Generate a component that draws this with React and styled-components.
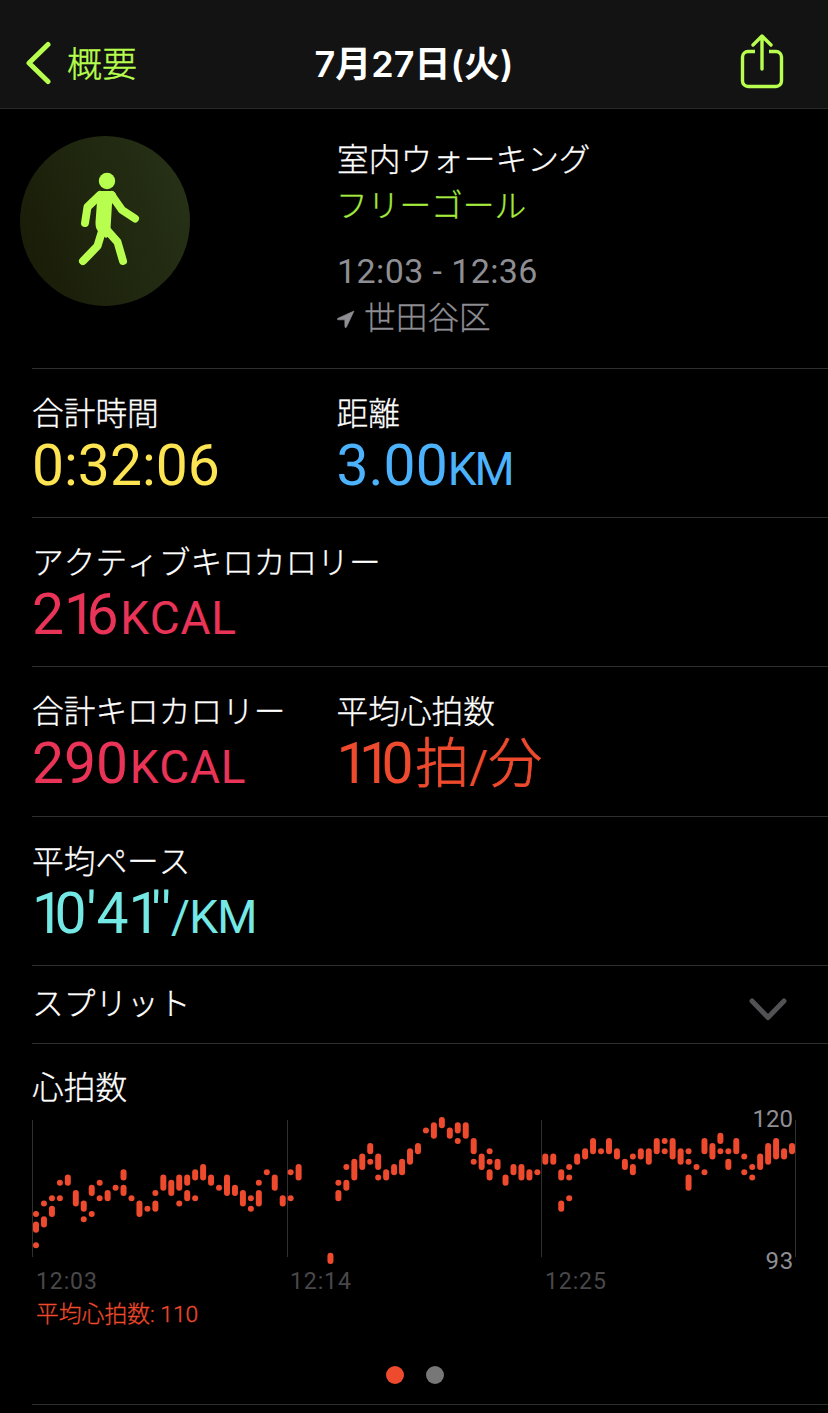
import styled, { createGlobalStyle } from "styled-components";

const GlobalStyle = createGlobalStyle`
  * {
    box-sizing: border-box;
  }

  body {
    margin: 0;
    background: #000;
  }

  h1, h2, p {
    margin: 0;
    font-weight: inherit;
  }
`;

const colors = {
  green: "#b8fe4e",
  goal: "#a5ec3e",
  yellow: "#fde452",
  blue: "#4cb2fb",
  pink: "#e93458",
  orange: "#ee4a2d",
  teal: "#74e8e4",
  gray: "#8e8e93",
  dim: "#48484a",
  line: "#2f2f31",
};

const Page = styled.div`
  width: 828px;
  height: 1413px;
  overflow: hidden;
  background: #000;
  color: #fff;
  font-family: Roboto, "Noto Sans CJK JP", sans-serif;
  font-weight: 300;
  font-kerning: none;
`;

const NavBar = styled.header`
  height: 109px;
  padding: 20px 44px 0 25px;
  display: grid;
  grid-template-columns: 1fr auto 1fr;
  align-items: center;
  background: #131313;
  border-bottom: 1px solid #29292b;
`;

const BackButton = styled.button`
  display: flex;
  align-items: center;
  gap: 16px;
  padding: 0;
  border: 0;
  background: none;
  color: ${colors.green};
  font-family: inherit;
  font-size: 35px;
  font-weight: 300;
  line-height: 50px;
  -webkit-text-stroke: 0.4px currentColor;

  > span {
    padding-top: 3px;
  }

  > svg {
    margin-bottom: 2px;
  }
`;

const NavTitle = styled.h1`
  padding-left: 19px;
  font-family: Inter, "Noto Sans CJK JP", sans-serif;
  font-size: 36px;
  font-weight: 600;
  line-height: 50px;
`;

const ShareButton = styled.button`
  justify-self: end;
  display: flex;
  margin-bottom: 4px;
  padding: 0;
  border: 0;
  background: none;
`;

const Summary = styled.section`
  height: 259px;
  display: grid;
  grid-template-columns: 317px 1fr;
  padding: 27px 0 0 20px;
`;

const Badge = styled.div`
  width: 170px;
  height: 170px;
  border-radius: 50%;
  background: linear-gradient(70deg, #191b07 5%, #20270f 50%, #263217 95%);
`;

const SummaryText = styled.div`
  padding-top: 2px;
  font-size: 31.7px;
  line-height: 46px;
  -webkit-text-stroke: 0.3px currentColor;
`;

const Goal = styled.p`
  margin-left: -1px;
  color: ${colors.goal};
`;

const Time = styled.p`
  margin: 18px 0 2px;
  color: ${colors.gray};
  font-size: 34px;
  font-weight: 400;
  letter-spacing: 0.4px;
  -webkit-text-stroke: 0;
`;

const Place = styled.p`
  display: flex;
  align-items: center;
  gap: 9px;
  color: ${colors.gray};
`;

const Row = styled.section`
  height: ${(props) => props.$height || 149}px;
  margin-left: 32px;
  padding-top: 26px;
  display: grid;
  grid-template-columns: 304.5px 1fr;
  align-items: start;
  border-top: 1px solid ${colors.line};
`;

const Label = styled.p`
  font-size: 31.7px;
  line-height: 40px;
  white-space: nowrap;
  -webkit-text-stroke: 0.3px currentColor;
`;

const Value = styled.p`
  margin-top: -2px;
  color: ${(props) => props.$color};
  font-size: 57px;
  font-weight: 400;
  line-height: 66px;
  white-space: nowrap;
`;

// the figure one is set tighter than the other digits
const One = styled.span`
  letter-spacing: -9.5px;
`;

const Unit = styled.span`
  margin-left: ${(props) => (props.$spacing < 0 ? 0 : 1.5)}px;
  font-size: 46px;
  letter-spacing: ${(props) => props.$spacing}px;
`;

const Kanji = styled.span`
  font-size: 54px;
  font-weight: 300;
  line-height: 1;
  -webkit-text-stroke: 0.8px currentColor;
`;

const SplitRow = styled.section`
  height: 78px;
  margin-left: 32px;
  padding: 0 41px 0 0;
  display: flex;
  align-items: center;
  justify-content: space-between;
  border-top: 1px solid ${colors.line};

  > svg {
    margin-top: 10px;
  }
`;

const HeartSection = styled.section`
  height: 361px;
  margin-left: 32px;
  padding-top: 25px;
  border-top: 1px solid ${colors.line};
`;

const Chart = styled.svg`
  display: block;
  margin-top: -12px;
  font-family: Roboto, sans-serif;
  font-size: 24px;
  font-weight: 400;
`;

const Average = styled.p`
  padding: 1px 0 0 4px;
  color: ${colors.orange};
  font-size: 22.8px;
  line-height: 30px;
  -webkit-text-stroke: 0.3px currentColor;
`;

const Pager = styled.div`
  display: flex;
  gap: 22px;
  margin: 36px 0 0 354px;
`;

const Dot = styled.span`
  width: 18px;
  height: 18px;
  border-radius: 50%;
  background: ${(props) => (props.$active ? colors.orange : "#777")};
`;

const BottomLine = styled.div`
  margin-left: 32px;
  border-top: 1px solid ${colors.line};
`;

// each slot lists its [high, low] ranges in bpm
const heartRate = [
  [[102, 102], [100, 99], [96, 96]],
  [[104, 104], [101, 100]],
  [[105, 105], [103, 102]],
  [[108, 108], [105, 105]],
  [[109, 108]],
  [[106, 104]],
  [[104, 103], [101, 101]],
  [[107, 106], [102, 102]],
  [[108, 108], [105, 105]],
  [[106, 105]],
  [[107, 107]],
  [[110, 109], [107, 106]],
  [[105, 105]],
  [[104, 102]],
  [[103, 103]],
  [[106, 106], [104, 103]],
  [[109, 107]],
  [[108, 106]],
  [[109, 107], [104, 104]],
  [[109, 108], [106, 105]],
  [[110, 109], [105, 105]],
  [[111, 109]],
  [[109, 108]],
  [[107, 107]],
  [[109, 106]],
  [[107, 106]],
  [[106, 104]],
  [[105, 105], [103, 103]],
  [[108, 108], [106, 104]],
  [[110, 110]],
  [[109, 107]],
  [[105, 104]],
  [[110, 110], [105, 105]],
  [[111, 109]],
  [],
  [],
  [],
  [[94, 93]],
  [[108, 108], [106, 105]],
  [[111, 111], [108, 107]],
  [[112, 109]],
  [[113, 111]],
  [[115, 114], [112, 112]],
  [[113, 111], [109, 109]],
  [[110, 109]],
  [[111, 110]],
  [[112, 110]],
  [[114, 112]],
  [[115, 114]],
  [[118, 118]],
  [[119, 117]],
  [[120, 119]],
  [[118, 117]],
  [[119, 118], [116, 116]],
  [[119, 117]],
  [[116, 114], [112, 112]],
  [[113, 111]],
  [[114, 114], [112, 112], [110, 109]],
  [[112, 111]],
  [[109, 108]],
  [[111, 110]],
  [[111, 109]],
  [[110, 109]],
  [[110, 110]],
  [[113, 112]],
  [[113, 112]],
  [[110, 109], [104, 103]],
  [[111, 111], [109, 109], [105, 105]],
  [[113, 112]],
  [[114, 113]],
  [[116, 114]],
  [[114, 114]],
  [[116, 114]],
  [[114, 113]],
  [[112, 111]],
  [[113, 113], [111, 110]],
  [[114, 113]],
  [[114, 112]],
  [[116, 114]],
  [[116, 116], [114, 114]],
  [[116, 113]],
  [[114, 112]],
  [[114, 114], [112, 112], [109, 107]],
  [[111, 111]],
  [[116, 114], [110, 110]],
  [[115, 113]],
  [[117, 116], [114, 114]],
  [[114, 114], [112, 111]],
  [[116, 114]],
  [[113, 113], [110, 110]],
  [[111, 111], [109, 109]],
  [[113, 111]],
  [[115, 112]],
  [[116, 113]],
  [[114, 113]],
  [[115, 114]],
];

const slotX = (index) => 4 + index * 7.958;
const bpmY = (bpm) => 13 + (120 - bpm) * 5.22;

const HeartChart = () => (
  <Chart width="796" height="202" viewBox="0 -10 796 202">
    {[0.5, 255.5, 509.5, 763.5].map((x) => (
      <line key={x} x1={x} x2={x} y1="13" y2="150" stroke={colors.line} />
    ))}
    <g stroke={colors.orange} strokeWidth="6" strokeLinecap="round">
      {heartRate.map((ranges, index) =>
        ranges.map(([high, low]) => (
          <line
            key={`${index}-${high}`}
            x1={slotX(index)}
            x2={slotX(index)}
            y1={bpmY(high)}
            y2={bpmY(low) + 0.01}
          />
        ))
      )}
    </g>
    <g fill={colors.gray} textAnchor="end">
      <text x="761" y="20">120</text>
      <text x="762" y="162" letterSpacing="0.8">93</text>
    </g>
    <g fill={colors.dim} fontSize="23" letterSpacing="0.9">
      <text x="4" y="182">12:03</text>
      <text x="258" y="182">12:14</text>
      <text x="513" y="182">12:25</text>
    </g>
  </Chart>
);

const BackIcon = () => (
  <svg width="26" height="44" viewBox="0 0 26 44" fill="none">
    <path
      d="M23 3.5 4 22l19 18.5"
      stroke={colors.green}
      strokeWidth="5"
      strokeLinecap="round"
      strokeLinejoin="round"
    />
  </svg>
);

const ShareIcon = () => (
  <svg width="44" height="56" viewBox="0 0 44 56" fill="none">
    <g
      stroke={colors.green}
      strokeWidth="3.4"
      strokeLinejoin="round"
    >
      <path d="M15 17.5H8A5.5 5.5 0 0 0 2.5 23v24A5.5 5.5 0 0 0 8 52.5h28a5.5 5.5 0 0 0 5.5-5.5V23a5.5 5.5 0 0 0-5.5-5.5h-7" />
      <path d="M22 35V2M13 11 22 2l9 9" strokeLinecap="round" />
    </g>
  </svg>
);

const WalkIcon = () => (
  <svg width="170" height="170" viewBox="0 0 170 170" fill="none">
    <circle cx="87" cy="45" r="8.2" fill={colors.green} />
    <path
      d="M80 55h11c4 0 6 3 5 7l-4 6-1.500 25c2 3 0 6-4.500 9l-5-4c-5-4-5.500-7-5.500-12L77 66z"
      fill={colors.green}
    />
    <g
      stroke={colors.green}
      strokeWidth="8"
      strokeLinecap="round"
      strokeLinejoin="round"
    >
      <path d="M80 59 67.5 71 65 87" />
      <path d="M91.5 59 102 74l13 8.500" />
      <path d="M83 92l-5.500 18L63 125" />
      <path d="M86 93l11.500 13 5.500 19" />
    </g>
  </svg>
);

const PlaceIcon = () => (
  <svg width="18" height="18" viewBox="0 0 18 18">
    <path
      d="M17 1 1 8.200C0 8.700 0 9.800 1.200 9.800h6.600l.1 7c0 1.200 1.200 1.200 1.600.2z"
      fill={colors.gray}
      stroke={colors.gray}
      strokeWidth="0.6"
    />
  </svg>
);

const ChevronDown = () => (
  <svg width="38" height="24" viewBox="0 0 38 24" fill="none">
    <path
      d="M3 3l16 16.5L35 3"
      stroke="#525255"
      strokeWidth="5"
      strokeLinecap="round"
      strokeLinejoin="round"
    />
  </svg>
);

const Metric = ({ label, color, value, unit, spacing = 0 }) => (
  <div>
    <Label>{label}</Label>
    <Value $color={color}>
      {value
        .split("")
        .map((char, index) => (char === "1" ? <One key={index}>1</One> : char))}
      {unit && <Unit $spacing={spacing}>{unit}</Unit>}
    </Value>
  </div>
);

const App = () => {
  return (
    <Page>
      <GlobalStyle />
      <NavBar>
        <BackButton>
          <BackIcon />
          <span>概要</span>
        </BackButton>
        <NavTitle>7月27日(火)</NavTitle>
        <ShareButton aria-label="共有">
          <ShareIcon />
        </ShareButton>
      </NavBar>
      <Summary>
        <Badge>
          <WalkIcon />
        </Badge>
        <SummaryText>
          <p>室内ウォーキング</p>
          <Goal>フリーゴール</Goal>
          <Time>12:03 - 12:36</Time>
          <Place>
            <PlaceIcon />
            世田谷区
          </Place>
        </SummaryText>
      </Summary>
      <Row>
        <Metric label="合計時間" color={colors.yellow} value="0:32:06" />
        <Metric
          label="距離"
          color={colors.blue}
          value="3.00"
          unit="KM"
          spacing={-2}
        />
      </Row>
      <Row>
        <Metric
          label="アクティブキロカロリー"
          color={colors.pink}
          value="216"
          unit="KCAL"
          spacing={0.8}
        />
      </Row>
      <Row $height={150}>
        <Metric
          label="合計キロカロリー"
          color={colors.pink}
          value="290"
          unit="KCAL"
          spacing={0.8}
        />
        <Metric
          label="平均心拍数"
          color={colors.orange}
          value="110"
          unit={
            <>
              <Kanji>拍</Kanji>/<Kanji>分</Kanji>
            </>
          }
        />
      </Row>
      <Row>
        <Metric
          label="平均ペース"
          color={colors.teal}
          value={"10'41''"}
          unit="/KM"
          spacing={-0.8}
        />
      </Row>
      <SplitRow>
        <Label>スプリット</Label>
        <ChevronDown />
      </SplitRow>
      <HeartSection>
        <Label>心拍数</Label>
        <HeartChart />
        <Average>平均心拍数: 110</Average>
        <Pager>
          <Dot $active />
          <Dot />
        </Pager>
      </HeartSection>
      <BottomLine />
    </Page>
  );
};

export default App;
